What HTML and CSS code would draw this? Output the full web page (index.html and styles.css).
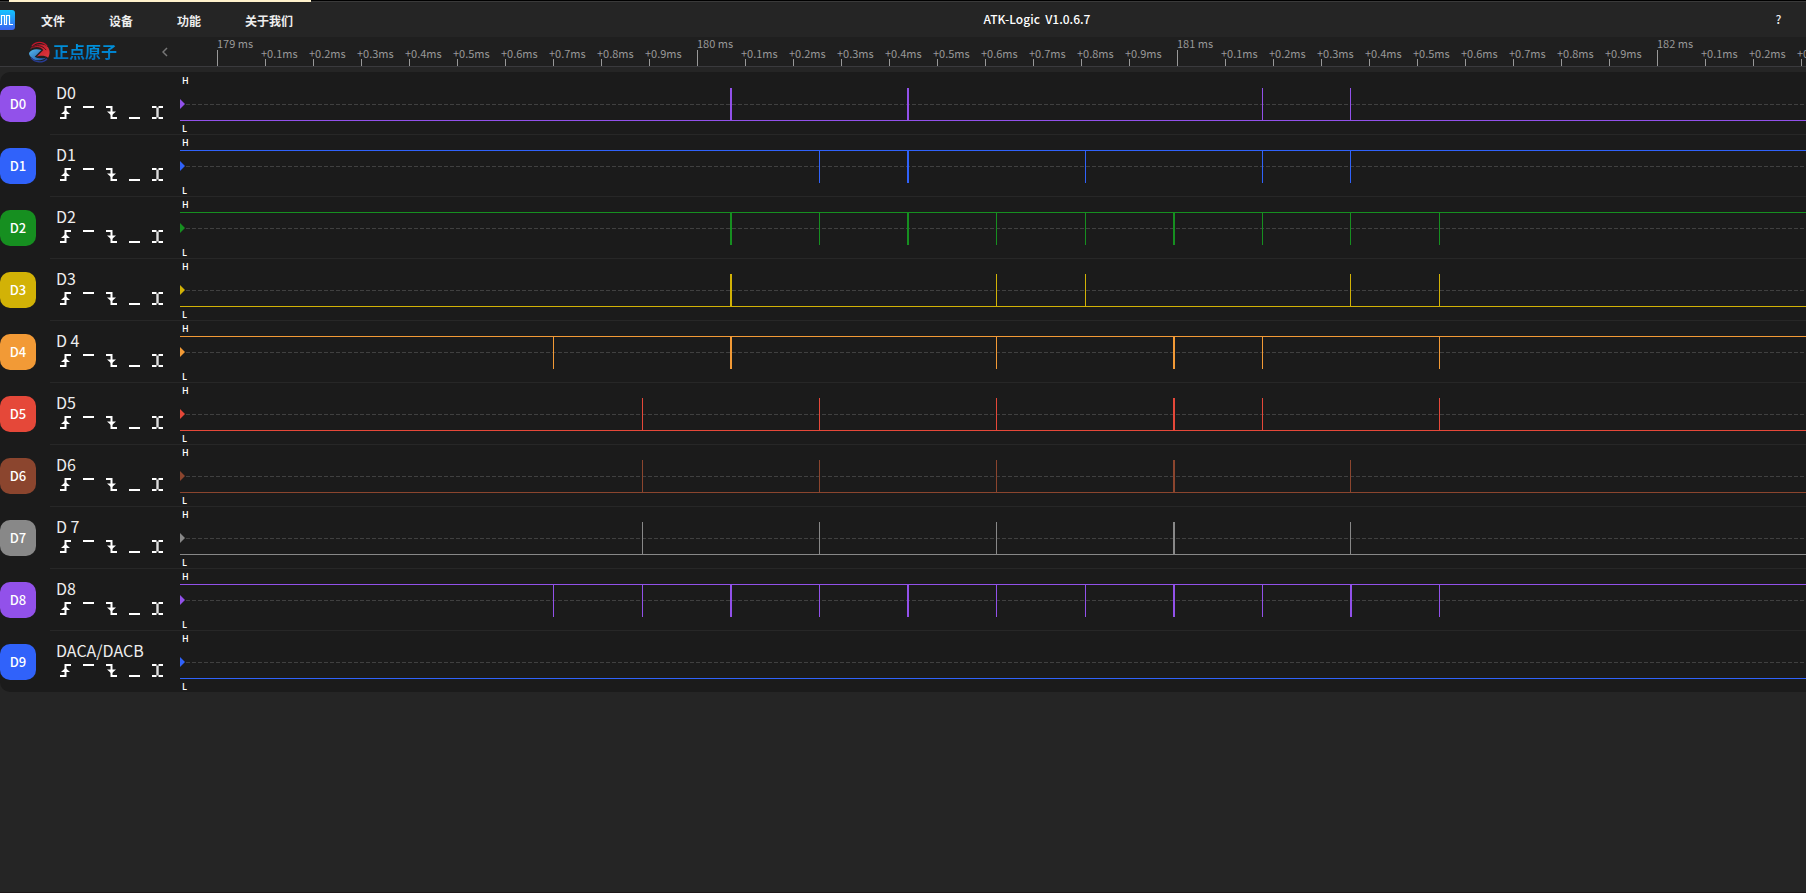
FILE: index.html
```html
<!DOCTYPE html>
<html lang="zh-CN">
<head>
<meta charset="utf-8">
<title>ATK-Logic V1.0.6.7</title>
<link rel="stylesheet" href="styles.css">
</head>
<body>
<svg class="defs" aria-hidden="true">
  <symbol id="rise" viewBox="0 0 11 13"><path d="M0 12H5.5V1H11" fill="none" stroke="#fff" stroke-width="2"/><path d="M5.5 4L10 8H1Z" fill="#fff"/></symbol>
  <symbol id="high" viewBox="0 0 11 13"><path d="M0 1H11" stroke="#fff" stroke-width="2"/></symbol>
  <symbol id="fall" viewBox="0 0 11 13"><path d="M0 1H5.500V12H11" fill="none" stroke="#fff" stroke-width="2"/><path d="M5.500 9.500L10 5.500H1Z" fill="#fff"/></symbol>
  <symbol id="low" viewBox="0 0 11 13"><path d="M0 12H11" stroke="#fff" stroke-width="2"/></symbol>
  <symbol id="both" viewBox="0 0 11 13"><path d="M0 1H4.500M6.500 1H11M0 12H4.500M6.500 12H11" stroke="#fff" stroke-width="2"/><path d="M5.500 1.500V11.500" stroke="#ddd" stroke-width="2.400"/></symbol>
</svg>
<div class="desktop"><span class="strip"></span></div>
<header class="titlebar">
  <svg class="app-icon" viewBox="0 0 15 20" role="img" aria-label="ATK-Logic">
    <defs><linearGradient id="appfill" x1="0" y1="0" x2="0" y2="1"><stop offset="0" stop-color="#12c4ff"/><stop offset="1" stop-color="#3a62f0"/></linearGradient></defs>
    <rect x="-5" width="20" height="20" rx="3" fill="url(#appfill)"/>
    <path d="M-1 14.500H1.500V5.500H4.500V14.500H6.500V5.500H9.500V14.500H13" fill="none" stroke="#fff" stroke-width="1.200"/>
  </svg>
  <nav class="menu">
    <button type="button">文件</button>
    <button type="button">设备</button>
    <button type="button">功能</button>
    <button type="button">关于我们</button>
  </nav>
  <h1 class="title">ATK-Logic&nbsp; V1.0.6.7</h1>
  <button type="button" class="help">?</button>
</header>
<section class="ruler-row">
  <div class="brand">
    <svg class="brand-mark" viewBox="0 0 22 22" aria-hidden="true">
      <defs>
        <linearGradient id="redfill" x1="0" y1="0" x2="1" y2="1"><stop offset="0" stop-color="#b51225"/><stop offset="1" stop-color="#e03a3e"/></linearGradient>
        <linearGradient id="bluefill" x1="0" y1="0" x2="1" y2="1"><stop offset="0" stop-color="#55b8ec"/><stop offset="1" stop-color="#1b4fa3"/></linearGradient>
      </defs>
      <path d="M3 5C7 -0.500 15 -0.500 19 5" fill="none" stroke="#c0162b" stroke-width="1.400"/>
      <path d="M1 8C5 2 15 1 20 6C23 11 21 15 20 17C16 14 11 15 8 16L15 9C12 5 6 5 1 8Z" fill="url(#redfill)"/>
      <path d="M3 6C8 3 14 4 18 9" fill="none" stroke="#4a1018"/>
      <path d="M0 12C2 8 8 7 13 9L6 16C9 18 14 18 18 17C13 20.500 7 20.500 4 18C1 16 0 14 0 12Z" fill="url(#bluefill)"/>
      <path d="M2 17C6 22.500 15 22.500 19 18" fill="none" stroke="#283c94" stroke-width="1.400"/>
    </svg>
    <span class="brand-name">正点原子</span>
    <button type="button" class="collapse" aria-label="收起">
      <svg viewBox="0 0 6 10"><path d="M5 1L1 5L5 9" fill="none" stroke="#777" stroke-width="1.500"/></svg>
    </button>
  </div>
  <div class="ruler" id="ruler"></div>
</section>
<main class="channels" id="channels"></main>
<footer class="edge"></footer>
<script src="app.js"></script>
</body>
</html>
```
FILE: styles.css
```css
* { box-sizing: border-box; }
body {
  margin: 0;
  min-height: 100vh;
  display: flex;
  flex-direction: column;
  background: #252525;
  color: #eee;
  font-family: "Noto Sans CJK SC", "Noto Sans", sans-serif;
  overflow: hidden;
}
button { border: 0; padding: 0; background: none; color: inherit; font: inherit; cursor: pointer; }
.defs { position: absolute; width: 0; height: 0; }
.desktop { height: 2px; background: #000; border-bottom: 1px solid #3a3a3a; padding-left: 9px; }
.strip { display: block; width: 302px; height: 2px; background: #fff2cc; position: relative; }
.titlebar {
  height: 35px;
  display: flex;
  align-items: center;
  font-size: 12px;
  font-weight: 700;
}
.app-icon { flex: none; width: 15px; height: 20px; }
.menu { display: flex; gap: 44px; padding: 2px 30px 0 26px; }
.title { flex: 1; margin: 0; padding-bottom: 2px; font-size: 12px; font-weight: 500; color: #fff; text-align: center; }
.help { width: 55px; padding-bottom: 2px; font-weight: 500; }
.ruler-row { height: 30px; display: flex; background: #1f1f1f; border-bottom: 1px solid #3a3a3d; }
.brand { flex: none; width: 180px; display: flex; align-items: center; padding-left: 29px; }
.brand-mark { width: 21px; height: 22px; }
.brand-name {
  margin-left: 3px;
  padding-bottom: 1px;
  font-size: 16px;
  line-height: 24px;
  font-weight: 700;
  background: linear-gradient(#00a0e9, #0068b7);
  background-clip: text;
  color: transparent;
}
.collapse { margin: 0 12px 0 auto; width: 6px; height: 10px; display: flex; }
.ruler { flex: 1; min-width: 0; display: flex; overflow: hidden; padding-left: 37px; color: #999; font-size: 11px; }
.tick { flex: none; width: 48px; height: 29px; display: flex; flex-direction: column; justify-content: flex-end; white-space: nowrap; line-height: 12px; }
.tick::after { content: ""; width: 1px; height: 7px; background: #999; }
.tick span { margin-left: -4px; }
.tick.major span { margin: 0 0 1px; }
.tick.major::after { height: 16px; }
.channels { margin-top: 5px; background: #1b1b1b; border-radius: 10px 0 0 10px; overflow: hidden; }
.channel { height: 62px; display: flex; align-items: stretch; }
.badge {
  flex: none; margin-top: 14px; width: 36px; height: 36px; border-radius: 10px;
  display: flex; align-items: center; justify-content: center; padding-bottom: 1px;
  background: var(--c); color: #fff; font-size: 13px; font-weight: 500;
}
.body { flex: 1; min-width: 0; margin-left: 14px; display: flex; border-top: 1px solid #272727; }
.channel:first-child .body { border-color: transparent; }
.info { flex: none; width: 130px; padding: 9px 0 0 6px; }
.name { font-size: 16px; line-height: 20px; }
.triggers { display: flex; gap: 12px; padding: 4px 0 0 4px; }
.triggers button { width: 11px; height: 13px; display: flex; }
.triggers svg { width: 11px; height: 13px; }
.wave { flex: 1; min-width: 0; width: 100%; height: 61px; display: block; overflow: hidden; }
.wave text { font-size: 9px; font-weight: 500; fill: #fff; }
.mid { stroke: #404040; stroke-dasharray: 4 2; }
.signal { fill: var(--c); }
.edge { margin-top: auto; height: 1px; background: #1c1618; }
```
FILE: app.js
```js
const edges = [373, 462, 550, 639, 727, 816, 905, 993, 1082, 1170, 1259];
const wideEdges = [2, 4, 7];
const channels = [
  { id: "D0", name: "D0", color: "#9251ea", high: 0, pulses: [2, 4, 8, 9] },
  { id: "D1", name: "D1", color: "#3062fa", high: 1, pulses: [3, 4, 6, 8, 9] },
  { id: "D2", name: "D2", color: "#168f20", high: 1, pulses: [2, 3, 4, 5, 6, 7, 8, 9, 10] },
  { id: "D3", name: "D3", color: "#d2b206", high: 0, pulses: [2, 5, 6, 9, 10] },
  { id: "D4", name: "D 4", color: "#f29a36", high: 1, pulses: [0, 2, 5, 7, 8, 10] },
  { id: "D5", name: "D5", color: "#e54839", high: 0, pulses: [1, 3, 5, 7, 8, 10] },
  { id: "D6", name: "D6", color: "#8b452e", high: 0, pulses: [1, 3, 5, 7, 9] },
  { id: "D7", name: "D 7", color: "#888888", high: 0, pulses: [1, 3, 5, 7, 9] },
  { id: "D8", name: "D8", color: "#9251ea", high: 1, pulses: [0, 1, 2, 3, 4, 5, 6, 7, 8, 9, 10], wide: [9] },
  { id: "D9", name: "DACA/DACB", color: "#3062fa", high: 0, pulses: [] }
];
const triggers = [["rise", "上升沿"], ["high", "高电平"], ["fall", "下降沿"], ["low", "低电平"], ["both", "双边沿"]];

const ticks = [];
for (let i = 0; i < 34; i++) {
  const major = i % 10 === 0;
  const label = major ? `${179 + i / 10} ms` : `+0.${i % 10}ms`;
  ticks.push(`<div class="tick${major ? " major" : ""}"><span>${label}</span></div>`);
}
document.getElementById("ruler").innerHTML = ticks.join("");

function wave(c) {
  const wide = wideEdges.concat(c.wide || []);
  const pulses = c.pulses.map(k =>
    `<rect x="${edges[k]}" y="15" width="${wide.includes(k) ? 2 : 1}" height="33"/>`).join("");
  return `<svg class="wave"><path class="mid" d="M6 31.5H4000"/>
    <g class="signal"><rect y="${c.high ? 15 : 47}" width="100%" height="1"/>${pulses}<path d="M0 26L5 31L0 36Z"/></g>
    <text x="2" y="11">H</text><text x="2" y="59">L</text></svg>`;
}

document.getElementById("channels").innerHTML = channels.map(c => `
  <section class="channel" style="--c:${c.color}">
    <button type="button" class="badge">${c.id}</button>
    <div class="body">
      <div class="info">
        <div class="name">${c.name}</div>
        <div class="triggers">${triggers.map(t =>
          `<button type="button" aria-label="${c.id} ${t[1]}"><svg><use href="#${t[0]}"/></svg></button>`).join("")}</div>
      </div>
      ${wave(c)}
    </div>
  </section>`).join("");
```
